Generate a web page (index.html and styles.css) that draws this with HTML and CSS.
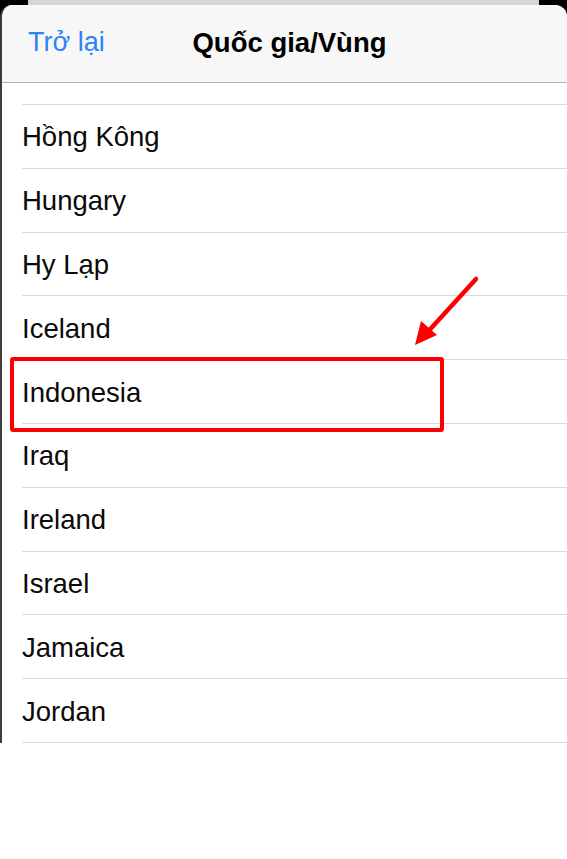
FILE: index.html
```html
<!DOCTYPE html>
<html lang="vi">
<head>
<meta charset="utf-8">
<title>Quốc gia/Vùng</title>
<link rel="stylesheet" href="styles.css">
</head>
<body>
<div class="screen">
  <div class="backcard"></div>
  <div class="sheet">
    <header class="nav">
      <span class="back">Trở lại</span>
      <span class="title">Quốc gia/Vùng</span>
      <span></span>
    </header>
    <div class="lead"></div>
    <ul class="list">
      <li class="row">Hồng Kông</li>
      <li class="row">Hungary</li>
      <li class="row">Hy Lạp</li>
      <li class="row">Iceland</li>
      <li class="row">Indonesia</li>
      <li class="row">Iraq</li>
      <li class="row">Ireland</li>
      <li class="row">Israel</li>
      <li class="row">Jamaica</li>
      <li class="row">Jordan</li>
    </ul>
  </div>
  <div class="highlight"></div>
  <svg class="arrow" width="567" height="859" viewBox="0 0 567 859">
    <line x1="476" y1="279" x2="424" y2="336" stroke="#ff0000" stroke-width="4.5" stroke-linecap="round"/>
    <polygon points="415,345 421,321 437,335" fill="#ff0000"/>
  </svg>
</div>
</body>
</html>
```
FILE: styles.css
```css
* { box-sizing: border-box; }
html, body { margin: 0; padding: 0; background: #ffffff; }
body { font-family: "Liberation Sans", Arial, sans-serif; color: #000; }
.screen { position: relative; width: 567px; height: 859px; background: #ffffff; }
.screen::before { content: ""; display: block; position: absolute; left: 0; right: 0; top: 0; height: 20px; background: #000; }
.backcard { position: relative; height: 5px; margin: 0 28px; background: #d6d6d6; border-radius: 0; }
.sheet { position: relative; background: #fff; border-radius: 12px 12px 0 0; border-left: 2px solid #3c3c3c; overflow: hidden; }
.nav { display: grid; grid-template-columns: 1fr auto 1fr; align-items: center; height: 78px; padding: 0 16px 2px 26px; background: #f7f7f7; border-bottom: 1px solid #b3b3b3; }
.back { color: #2d84f6; font-size: 27px; justify-self: start; }
.title { font-weight: bold; font-size: 27.5px; color: #000; }
.lead { height: 22px; border-bottom: 1px solid #d9d9d9; margin-left: 20px; }
.list { list-style: none; margin: 0; padding: 0; }
.row { display: flex; align-items: center; height: 63.8px; margin-left: 20px; padding-top: 2px; border-bottom: 1px solid #d9d9d9; font-size: 27.5px; color: #0a0a0a; }
.highlight { position: absolute; left: 10px; top: 357px; width: 434px; height: 75px; border: 4px solid #ff0000; border-radius: 3px; }
.arrow { position: absolute; left: 0; top: 0; pointer-events: none; }
```
